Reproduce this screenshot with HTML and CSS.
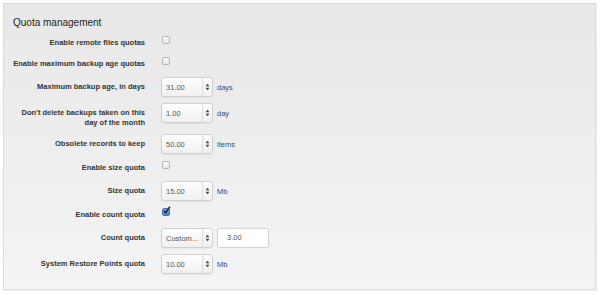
FILE: index.html
```html
<!DOCTYPE html>
<html lang="en">
<head>
    <meta charset="UTF-8">
    <title>Quota management</title>
    <link rel="stylesheet" href="styles.css">
</head>
<body>
    <div class="panel">
        <h2 class="panel-title">Quota management</h2>

        <div class="form">
            <div class="row row-check">
                <label>Enable remote files quotas</label>
                <div class="control"><span class="check"></span></div>
            </div>

            <div class="row row-check">
                <label>Enable maximum backup age quotas</label>
                <div class="control"><span class="check"></span></div>
            </div>

            <div class="row">
                <label>Maximum backup age, in days</label>
                <div class="control">
                    <div class="select"><span class="value">31.00</span><span class="arrows"><svg width="5" height="8" viewBox="0 0 5 8"><path d="M0.5 3.2 L2.5 0.8 L4.5 3.2 Z M0.5 4.8 L2.5 7.2 L4.5 4.8 Z" fill="#444"/></svg></span></div>
                    <span class="unit">days</span>
                </div>
            </div>

            <div class="row row-tall">
                <label>Don't delete backups taken on this day of the month</label>
                <div class="control">
                    <div class="select"><span class="value">1.00</span><span class="arrows"><svg width="5" height="8" viewBox="0 0 5 8"><path d="M0.5 3.2 L2.5 0.8 L4.5 3.2 Z M0.5 4.8 L2.5 7.2 L4.5 4.8 Z" fill="#444"/></svg></span></div>
                    <span class="unit">day</span>
                </div>
            </div>

            <div class="row">
                <label>Obsolete records to keep</label>
                <div class="control">
                    <div class="select"><span class="value">50.00</span><span class="arrows"><svg width="5" height="8" viewBox="0 0 5 8"><path d="M0.5 3.2 L2.5 0.8 L4.5 3.2 Z M0.5 4.8 L2.5 7.2 L4.5 4.8 Z" fill="#444"/></svg></span></div>
                    <span class="unit">items</span>
                </div>
            </div>

            <div class="row row-check">
                <label>Enable size quota</label>
                <div class="control"><span class="check"></span></div>
            </div>

            <div class="row">
                <label>Size quota</label>
                <div class="control">
                    <div class="select"><span class="value">15.00</span><span class="arrows"><svg width="5" height="8" viewBox="0 0 5 8"><path d="M0.5 3.2 L2.5 0.8 L4.5 3.2 Z M0.5 4.8 L2.5 7.2 L4.5 4.8 Z" fill="#444"/></svg></span></div>
                    <span class="unit">Mb</span>
                </div>
            </div>

            <div class="row row-check">
                <label>Enable count quota</label>
                <div class="control">
                    <span class="check checked"><svg width="9" height="9" viewBox="0 0 9 9"><path d="M2 4.6 L3.8 6.6 L7.8 0.8" fill="none" stroke="#1d2b4a" stroke-width="1.6"/></svg></span>
                </div>
            </div>

            <div class="row">
                <label>Count quota</label>
                <div class="control">
                    <div class="select"><span class="value">Custom...</span><span class="arrows"><svg width="5" height="8" viewBox="0 0 5 8"><path d="M0.5 3.2 L2.5 0.8 L4.5 3.2 Z M0.5 4.8 L2.5 7.2 L4.5 4.8 Z" fill="#444"/></svg></span></div>
                    <div class="text-input">3.00</div>
                </div>
            </div>

            <div class="row row-last">
                <label>System Restore Points quota</label>
                <div class="control">
                    <div class="select"><span class="value">10.00</span><span class="arrows"><svg width="5" height="8" viewBox="0 0 5 8"><path d="M0.5 3.2 L2.5 0.8 L4.5 3.2 Z M0.5 4.8 L2.5 7.2 L4.5 4.8 Z" fill="#444"/></svg></span></div>
                    <span class="unit">Mb</span>
                </div>
            </div>
        </div>
    </div>
</body>
</html>
```

FILE: styles.css
```css
body {
    margin: 0;
    padding: 3px 4px 3px 3px;
    background: #ffffff;
    font-family: "Liberation Sans", Arial, sans-serif;
    color: #333;
}

.panel {
    border: 1px solid #d9d9d9;
    background: linear-gradient(#e8e8e8, #f4f4f4);
    box-shadow: 1px 1px 1px rgba(0, 0, 0, 0.06);
    padding: 13px 0 15px 9px;
}

.panel-title {
    margin: 0 0 6px 0;
    font-size: 10px;
    line-height: 12px;
    font-weight: normal;
    color: #222;
}

.row {
    display: grid;
    grid-template-columns: 132px auto;
    column-gap: 16px;
    align-items: center;
    height: 20px;
    margin-bottom: 6px;
}

.row label {
    text-align: right;
    font-size: 7.5px;
    line-height: 10px;
    font-weight: bold;
    color: #333;
}

.row-check {
    height: 15px;
}

.row-tall {
    height: 25px;
    align-items: start;
}

.row-tall label {
    padding-top: 5px;
}

.row-last {
    margin-top: 2px;
    margin-bottom: 0;
}

.control {
    display: flex;
    align-items: center;
    gap: 4px;
}

.check {
    display: block;
    width: 6px;
    height: 6px;
    margin-top: -5px;
    margin-left: 1px;
    border: 1px solid #b4b4b4;
    border-radius: 2px;
    background: linear-gradient(#ffffff, #e6e6e6);
    position: relative;
}

.check.checked {
    border-color: #4a6fae;
    background: linear-gradient(#8fb2ec, #4f7fd0);
}

.check.checked svg {
    position: absolute;
    left: -1px;
    top: -3px;
}

.select {
    display: flex;
    width: 50px;
    height: 18px;
    border: 1px solid #d0d0d0;
    border-radius: 3px;
    background: linear-gradient(#ffffff, #f0f0f0);
    box-shadow: 0 1px 1px rgba(0, 0, 0, 0.05);
    font-size: 7.5px;
    color: #555;
}

.select .value {
    flex: 1;
    display: flex;
    align-items: center;
    padding-left: 4px;
}

.select .arrows {
    width: 9px;
    display: flex;
    align-items: center;
    justify-content: center;
    border-left: 1px solid #dcdcdc;
}

.unit {
    font-size: 7.5px;
    color: #3d4a66;
}

.text-input {
    width: 41px;
    height: 18px;
    padding-left: 9px;
    border: 1px solid #d4d4d4;
    border-radius: 2px;
    background: #fff;
    font-size: 7.5px;
    line-height: 18px;
    color: #555;
}
```
